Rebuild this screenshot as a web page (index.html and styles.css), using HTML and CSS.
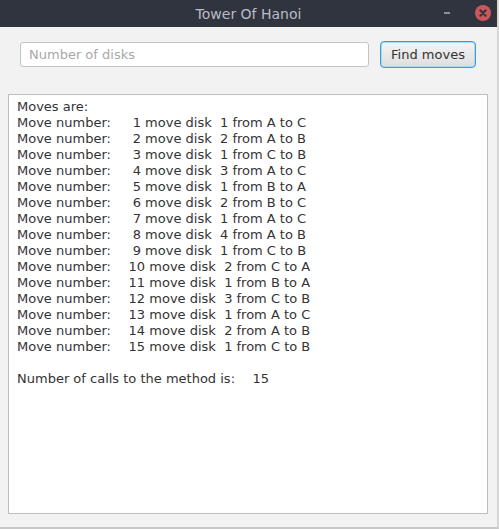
FILE: index.html
```html
<!DOCTYPE html>
<html lang="en">
<head>
  <meta charset="UTF-8">
  <meta name="viewport" content="width=device-width, initial-scale=1.0">
  <title>Tower Of Hanoi</title>
  <link rel="stylesheet" href="styles.css">
</head>
<body>
  <div class="window">
    <div class="titlebar">
      <span class="title">Tower Of Hanoi</span>
      <div class="controls">
        <span class="minimize"></span>
        <span class="close">
          <svg width="16" height="16" viewBox="0 0 16 16">
            <circle cx="8" cy="8" r="8" fill="#cc575d"/>
            <path d="M5.3 5.3 L10.7 10.7 M10.7 5.3 L5.3 10.7" stroke="#2f343f" stroke-width="2" stroke-linecap="round"/>
          </svg>
        </span>
      </div>
    </div>
    <div class="content">
      <div class="input-row">
        <input type="text" class="disks-input" placeholder="Number of disks">
        <button class="find-btn">Find moves</button>
      </div>
      <div class="output" id="output"></div>
    </div>
  </div>

  <script>
    // build the move list like the program prints it
    const lines = ['Moves are:'];
    let count = 0;

    function pad(n, w) {
      let s = String(n);
      while (s.length < w) s = ' ' + s;
      return s;
    }

    function hanoi(n, from, to, via) {
      if (n === 0) return;
      hanoi(n - 1, from, via, to);
      count++;
      lines.push('Move number:\t' + pad(count, 5) + ' move disk ' + pad(n, 2) + ' from ' + from + ' to ' + to);
      hanoi(n - 1, via, to, from);
    }

    hanoi(4, 'A', 'B', 'C');
    lines.push('');
    lines.push('Number of calls to the method is:\t' + pad(count, 3));
    document.getElementById('output').textContent = lines.join('\n');
  </script>
</body>
</html>
```

FILE: styles.css
```css
body {
  margin: 0;
  font-family: "DejaVu Sans", sans-serif;
  background: #2f343f;
}
.window {
  width: 499px;
  height: 529px;
  display: flex;
  flex-direction: column;
  background: #f2f2f2;
  box-sizing: border-box;
  border-bottom: 2px solid #c8c8c8;
  border-right: 2px solid #d6d6d6;
}
.titlebar {
  height: 27px;
  background: #2f343f;
  display: flex;
  align-items: center;
  justify-content: center;
  position: relative;
}
.title {
  color: #b8bcc4;
  font-size: 14px;
}
.controls {
  position: absolute;
  right: 6px;
  top: 5px;
  display: flex;
  align-items: center;
  gap: 25px;
}
.minimize {
  width: 6px;
  height: 2px;
  background: #8a8f99;
}
.close {
  display: flex;
}
.content {
  flex: 1;
  padding: 14px 9px 13px 8px;
  display: flex;
  flex-direction: column;
}
.input-row {
  display: flex;
  align-items: center;
  padding: 0 12px 0 12px;
  gap: 11px;
  margin-bottom: 26px;
}
.disks-input {
  width: 349px;
  height: 25px;
  box-sizing: border-box;
  border: 1px solid #c4c4c4;
  border-radius: 3px;
  background: #fff;
  padding: 0 8px;
  font-family: "DejaVu Sans", sans-serif;
  font-size: 13px;
  color: #333;
}
.disks-input::placeholder {
  color: #a8a8a8;
}
.find-btn {
  width: 96px;
  height: 27px;
  box-sizing: border-box;
  border: 1px solid #3b9fd2;
  box-shadow: inset 0 0 0 1px #a9d7ee;
  border-radius: 4px;
  background: linear-gradient(#f4f4f4, #dedede);
  font-family: "DejaVu Sans", sans-serif;
  font-size: 13px;
  color: #333;
  padding: 0;
}
.output {
  flex: 1;
  background: #fff;
  border: 1px solid #bdbdbd;
  padding: 4px 8px;
  font-size: 13px;
  line-height: 16px;
  color: #333;
  white-space: pre;
  tab-size: 8;
}
```
